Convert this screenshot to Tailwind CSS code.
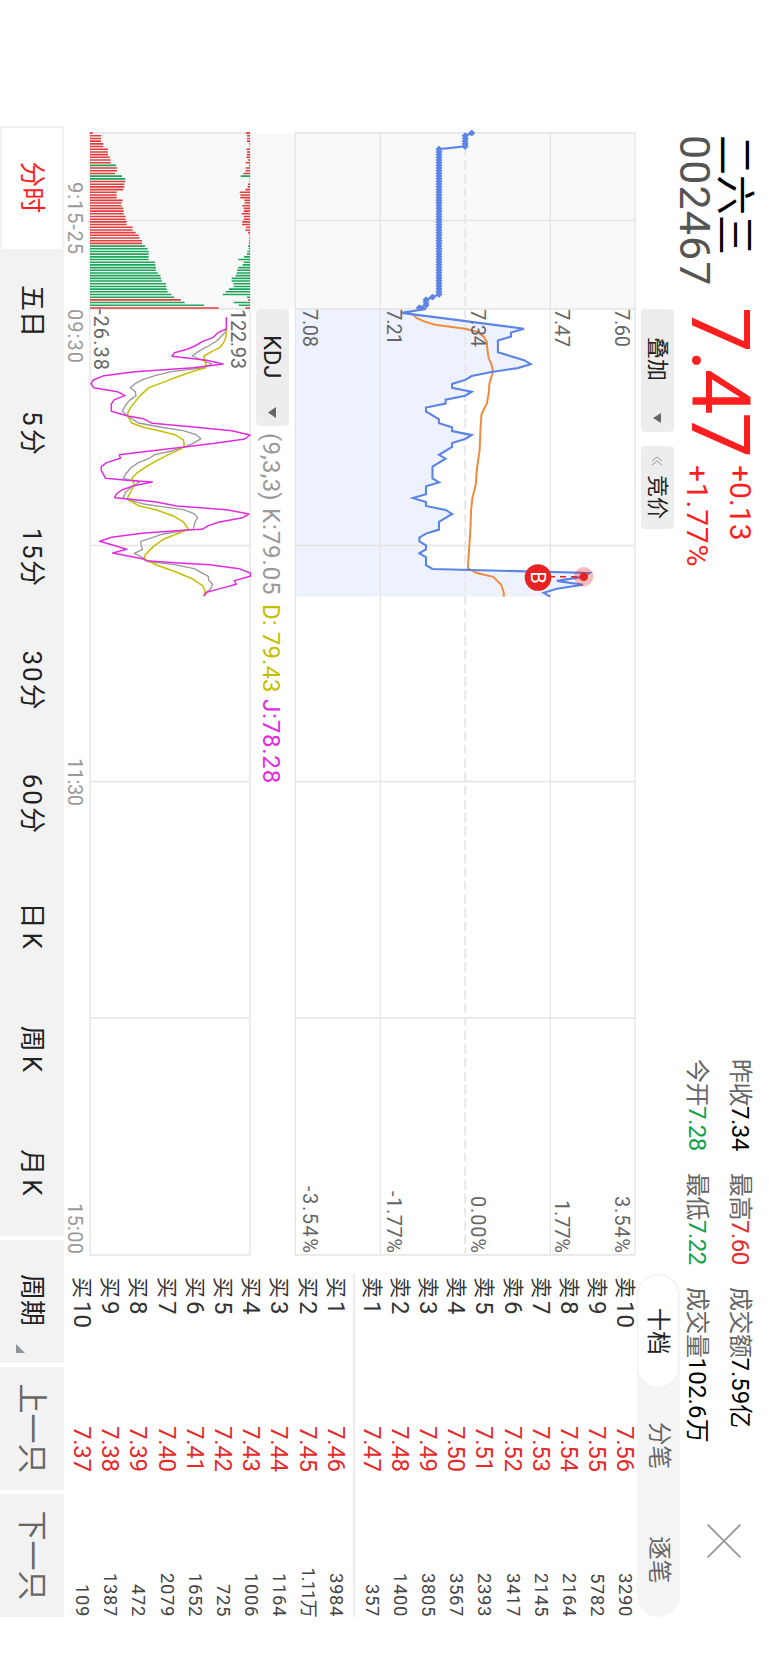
<!DOCTYPE html>
<html lang="zh">

<head>
    <meta charset="utf-8">
    <title>二六三 002467</title>
    <script src="https://cdn.jsdelivr.net/npm/@tailwindcss/browser@4"></script>
</head>

<body class="bg-white">
    <div class="w-[769px] h-[1665px] overflow-hidden">
    <!-- landscape screen, turned 90deg clockwise -->
    <main class="w-[1665px] h-[769px] origin-top-left translate-x-[769px] rotate-90 flex flex-col bg-white text-[#222] whitespace-nowrap font-['Roboto','Noto_Sans_CJK_SC',sans-serif]">

        <div class="flex h-[705px]">
            <div class="w-[1255px] shrink-0 pl-[133px] flex flex-col">
                <!-- header -->
                <header class="h-[89px] flex">
                    <div class="w-[176px] shrink-0 pt-[15px] pl-[2px]">
                        <h1 class="text-[40px] leading-[39px] text-black">二六三</h1>
                        <p class="text-[43px] leading-[40px] tracking-[1.1px] text-[#555]">002467</p>
                    </div>
                    <div class="w-[156px] shrink-0 text-[81px] leading-[100px] tracking-[-2.4px] text-[#fd1f1f] -ml-[2px]">7.47</div>
                    <div class="w-[596px] shrink-0 pt-[7px] pl-[2px] text-[30px] leading-[43px] text-[#fd1f1f]">
                        <p>+0.13</p>
                        <p class="tracking-[0.8px]">+1.77%</p>
                    </div>
                    <div class="shrink-0 pt-[8px] grid grid-cols-[114px_114px_170px] auto-rows-[43px] text-[24px] leading-[43px] tracking-[-0.5px] text-black">
                        <p><span class="text-[24px] text-[#666]">昨收</span><span>7.34</span></p>
                        <p><span class="text-[24px] text-[#666]">最高</span><span class="text-[#e42a2a]">7.60</span></p>
                        <p><span class="text-[24px] text-[#666]">成交额</span><span class="tracking-normal">7.59</span><span>亿</span></p>
                        <p><span class="text-[24px] text-[#666]">今开</span><span class="text-[#12a14b]">7.28</span></p>
                        <p><span class="text-[24px] text-[#666]">最低</span><span class="text-[#12a14b]">7.22</span></p>
                        <p><span class="text-[24px] text-[#666]">成交量</span><span class="tracking-[0.2px]">102.6</span><span>万</span></p>
                    </div>
                </header>

                <!-- overlay buttons -->
                <div class="h-[45px] shrink-0 pt-[6px] pl-[176px] flex gap-[14px] text-[22px] leading-[33px]">
                    <button class="w-[123px] h-[33px] rounded bg-[#ededed] flex items-center pl-[28px]">
                        <span>叠加</span>
                        <svg class="ml-[32px] shrink-0" width="10" height="8" viewBox="0 0 10 8"><path d="M0 0H10L5 8Z" fill="#666"/></svg>
                    </button>
                    <button class="w-[83px] h-[33px] rounded bg-[#ededed] flex items-center pl-[10px]">
                        <svg class="shrink-0" width="10" height="12" viewBox="0 0 10 12" fill="none" stroke="#999"><path d="M5 1L1 6L5 11M9 1L5 6L9 11"/></svg>
                        <span class="ml-[9px]">竞价</span>
                    </button>
                </div>

                <!-- price chart -->
                <svg class="h-[341px] shrink-0 overflow-visible" width="1123" height="341" viewBox="0 0 1123 341">
                    <rect width="176" height="341" fill="#f9f9f9"/>
                    <path id="area" fill="#eef2fe"/>
                    <g fill="none" stroke="#e4e4e4" stroke-width="1.3">
                        <path d="M0 0H1122V339.7H0ZM0 84.7H1122M0 254.7H1122M87.5 0V340M176 0V340M412.5 0V340M648.5 0V340M885 0V340"/>
                        <path d="M0 169.8H1122" stroke="#e8e8e8" stroke-width="2" stroke-dasharray="9.6 4"/>
                    </g>
                    <path id="avg" fill="none" stroke="#f08a3c" stroke-width="2" stroke-linejoin="round"/>
                    <path id="price" fill="none" stroke="#5a84e6" stroke-width="2.1"/>
                    <path id="auction" fill="#5a84e6" stroke="#5a84e6" stroke-width="1"/>
                    <g font-size="20" fill="#666">
                        <text x="176" y="20" textLength="38">7.60</text>
                        <text x="176" y="80.3" textLength="38">7.47</text>
                        <text x="176" y="164.3" textLength="38">7.34</text>
                        <text x="176" y="248.3" textLength="36">7.21</text>
                        <text x="176" y="332.3" textLength="38">7.08</text>
                        <text x="1063" y="20" textLength="57">3.54%</text>
                        <text x="1067" y="80.3" textLength="53">1.77%</text>
                        <text x="1063" y="164.3" textLength="57">0.00%</text>
                        <text x="1058" y="248.3" textLength="62">-1.77%</text>
                        <text x="1053" y="332.3" textLength="67">-3.54%</text>
                    </g>
                    <circle cx="443.7" cy="51.3" r="9.7" fill="#e62222" fill-opacity=".3"/>
                    <circle cx="443.7" cy="51.3" r="4.3" fill="#e62222"/>
                    <path d="M443.7 55V84" stroke="#e62222" stroke-width="1.5" stroke-dasharray="6 5" stroke-dashoffset="-3"/>
                    <circle cx="444.5" cy="97" r="13.3" fill="#e62222"/>
                    <text x="444.5" y="104.3" font-size="20" fill="#fff" text-anchor="middle">B</text>
                </svg>

                <!-- indicator row -->
                <div class="h-[44px] shrink-0 flex items-center text-[24px]">
                    <div class="w-[176px] h-[44px] bg-[#f9f9f9]"></div>
                    <button class="w-[117px] h-[33px] mt-[-1px] rounded bg-[#ededed] flex items-center pl-[26px]">
                        <span class="w-[43px] pt-[1px] tracking-[-0.3px]">KDJ</span>
                        <svg class="ml-[29px] shrink-0" width="11" height="8" viewBox="0 0 11 8"><path d="M0 0H11L5.5 8Z" fill="#666"/></svg>
                    </button>
                    <span class="ml-[7px] pt-[1px] w-[75px] tracking-[0.2px] text-[#999]">(9,3,3)</span>
                    <span class="w-[96px] pt-[1px] tracking-[0.9px] text-[#999]">K:79.05</span>
                    <span class="w-[95px] pt-[1px] tracking-[0.1px] text-[#c4be00]">D: 79.43</span>
                    <span class="pt-[1px] tracking-[0.8px] text-[#e12be0]">J:78.28</span>
                </div>

                <!-- KDJ chart, left part shows matched and unmatched auction volume -->
                <svg class="h-[186px] shrink-0 overflow-visible" width="1123" height="186" viewBox="0 0 1123 186">
                    <rect width="176" height="160" fill="#f9f9f9"/>
                    <path d="M0 0H1122V160H0ZM87.5 0V160M176 0V160M412.5 0V160M648.5 0V160M885 0V160" fill="none" stroke="#e4e4e4" stroke-width="1.3"/>
                    <path id="up" stroke="#e23c3c" stroke-width="1.6"/>
                    <path id="down" stroke="#1ca65a" stroke-width="1.6"/>
                    <g font-size="20" fill="#666">
                        <text x="176" y="19" textLength="60">122.93</text>
                        <text x="176" y="156.5" textLength="61">-26.38</text>
                    </g>
                    <g font-size="20" fill="#999">
                        <text x="49" y="182" textLength="72">9:15-25</text>
                        <text x="176" y="182" textLength="54">09:30</text>
                        <text x="625" y="182" textLength="48">11:30</text>
                        <text x="1070" y="182" textLength="51">15:00</text>
                    </g>
                    <g transform="matrix(0 -.3333 .3333 0 167 190)" fill="none" stroke-width="4" stroke-linejoin="round">
                        <polyline stroke="#999" points="499,87 497,95 485,108 470,123 445,138 430,146 410,158 397,168 425,180 455,192 433,203 335,215 285,227 250,238 225,251 211,263 226,275 228,287 208,302 195,318 187,334 204,348 235,369 300,381 370,392 408,404 423,416 400,430 374,441 335,453 284,464 268,475 235,488 212,504 197,522 190,535 215,541 240,546 215,560 198,575 189,593 207,600 250,612 305,620 370,629 402,641 413,653 405,666 400,688 370,692 310,702 243,724 243,736 248,748 223,760 252,775 265,785 345,794 402,806 445,829 446,841 458,853 452,866 440,877 433,888"/>
                        <polyline stroke="#c4be00" stroke-width="4.5" points="499,87 498,110 490,130 480,142 455,155 432,168 433,181 438,192 437,203 400,214 340,235 267,263 240,287 210,325 203,340 203,348 215,369 250,382 300,393 345,404 370,420 373,436 365,446 325,464 290,482 255,502 230,520 216,535 220,546 223,556 215,570 203,593 205,599 235,617 290,630 340,648 370,666 386,688 355,700 310,718 280,740 255,765 255,778 290,795 350,817 400,838 428,858 435,872 433,888"/>
                        <polyline stroke="#e12be0" stroke-width="4.5" points="499,52 499,87 474,98 460,112 428,124 410,135 384,147 343,158 336,169 440,181 489,192 400,203 225,215 132,227 100,240 93,251 101,263 172,275 195,287 163,299 154,312 154,334 203,348 250,356 277,370 400,381 515,392 570,405 555,417 465,430 374,441 270,453 178,464 181,475 140,488 124,500 124,512 137,535 200,541 277,546 222,557 185,570 169,582 164,593 203,597 285,605 350,618 500,629 567,642 548,653 478,666 445,677 427,688 380,690 245,700 155,712 119,724 160,736 200,748 158,759 250,777 258,782 355,789 450,794 537,806 571,819 571,829 523,842 529,853 480,866 440,877 431,888"/>
                    </g>
                </svg>
            </div>

            <!-- order book -->
            <aside class="w-[343px] shrink-0 ml-[19px] flex flex-col">
                <div class="h-[89px] pt-[28px] pl-[250px]">
                    <svg width="34" height="34" viewBox="0 0 34 34" stroke="#999" stroke-width="1.8"><path d="M.5 .5L33.5 33.5M33.5 .5L.5 33.5"/></svg>
                </div>
                <div class="h-[43px] shrink-0 rounded-full bg-[#f5f5f5] grid grid-cols-3 text-[23.5px] leading-[43px] text-center text-[#666]">
                    <span class="h-[42px] mt-[1px] leading-[40px] rounded-full bg-white border border-[#efefef] text-[#222]">十档</span>
                    <span>分笔</span>
                    <span>逐笔</span>
                </div>
                <div id="sell" class="mt-[-2px] h-[281px] shrink-0 flex flex-col"></div>
                <div class="mt-[3px] h-[2px] shrink-0 bg-[#ebebeb]"></div>
                <div id="buy" class="mt-[3px] h-[282px] shrink-0 flex flex-col"></div>
            </aside>
        </div>

        <!-- period tabs -->
        <nav class="h-[64px] ml-[126px] w-[1491px] flex gap-[4px] text-[26px] leading-[64px] text-center">
            <div class="w-[1110px] shrink-0 bg-[#f2f2f2] grid grid-cols-9">
                <div class="bg-white border-2 border-r-0 border-[#f2f2f2] pr-[3px] leading-[60px] text-[#fd1f1f]">分时</div>
                <div>五日</div>
                <div class="tracking-[3px]">5分</div>
                <div class="tracking-[1.5px]">15分</div>
                <div class="tracking-[2px]">30分</div>
                <div class="tracking-[2px]">60分</div>
                <div class="tracking-[4px]">日K</div>
                <div class="tracking-[4px]">周K</div>
                <div class="tracking-[4px]">月K</div>
            </div>
            <div class="w-[123px] shrink-0 bg-[#f2f2f2] flex items-end">
                <span class="ml-[34px]">周期</span>
                <svg class="ml-[18px] mb-[16px]" width="9" height="9" viewBox="0 0 9 9"><path d="M9 0V9H0Z" fill="#8f969b"/></svg>
            </div>
            <div class="w-[123px] shrink-0 bg-[#f2f2f2] text-[30px] text-[#666]">上一只</div>
            <div class="w-[123px] shrink-0 bg-[#f2f2f2] text-[30px] text-[#666]">下一只</div>
        </nav>
    </main>
    </div>

    <template id="row">
        <div class="flex-1 flex items-center text-[24px] leading-[28px]">
            <span class="w-[27px] pl-[3px] text-[21px] text-[#333]"></span>
            <span class="w-[125px] text-[#333]"></span>
            <span class="w-[70px] tracking-[-0.3px] text-[#e42a2a]"></span>
            <span class="flex-1 text-right text-[18.5px] text-[#444]"></span>
        </div>
    </template>

    <script>
        const $ = id => document.getElementById(id);

        // order book
        const sell = ['3290', '5782', '2164', '2145', '3417', '2393', '3567', '3805', '1400', '357'];
        const buy = ['3984', '1.11万', '1164', '1006', '725', '1652', '2079', '472', '1387', '109'];
        function addRow(box, side, level, price, volume) {
            const row = $('row').content.cloneNode(true);
            const cells = row.querySelectorAll('span');
            cells[0].textContent = side;
            cells[1].textContent = level;
            cells[2].textContent = price.toFixed(2);
            cells[3].textContent = volume;
            cells[3].classList.add(volume.endsWith('万') ? 'tracking-[-1px]' : 'tracking-[0.6px]');
            $(box).appendChild(row);
        }
        sell.forEach((v, i) => addRow('sell', '卖', 10 - i, 7.56 - i / 100, v));
        buy.forEach((v, i) => addRow('buy', '买', i + 1, 7.46 - i / 100, v));

        // price per minute, in cents from the previous close (7.34)
        const X = m => 176 + m * 3.94;
        const Y = c => 169.8 - c * 6.54;
        const prices = [[0, -6], [1, -9.7], [5, 9], [6, 7], [7, 7], [8, 5], [11, 5], [13, 9], [14, 10], [15, 8], [16, 4], [17, 1], [18, 0],
            [19, -2], [20, -2], [21, 1], [22, 0], [23, -3], [24, -3], [25, -6], [26, -6], [28, -4], [29, -4], [30, -2], [31, -2], [32, 1],
            [33, 0], [34, -2], [35, -2], [37, -4], [38, -3], [40, -5], [43, -5], [44, -4], [45, -6], [47, -6], [48, -8], [49, -6], [50, -6],
            [51, -3], [52, -2], [54, -4], [56, -4], [57, -6], [58, -7], [59, -7], [60, -6], [61, -6], [62, -7], [63, -6], [65, -6],
            [66, -5], [67, 19], [68, 18], [69, 14], [70, 18], [71, 14], [72, 12], [73, 13]];
        const avg = [[1, -9], [1.5, -7.9], [2.3, -7.4], [3.2, -6.2], [4, -4.6], [5, 0], [5.8, 1.9], [7, 2.8], [8.3, 3.3], [10.4, 3.4], [12.5, 3.6], [14, 4],
            [15.5, 4.2], [16, 4.2], [19, 3.7], [21.4, 3.6], [24, 3.3], [26.7, 2.5], [29.9, 2.35], [35.8, 2.2], [40.4, 1.8], [44.7, 1.6],
            [48, 1.1], [51, 0.9], [56, 0.8], [62, 0.55], [65.8, 0.4], [67, 1.8], [68, 4.3], [69, 4.9], [70, 5.5], [71, 5.7], [72, 5.9], [73, 5.9]];
        const line = pts => 'M' + pts.map(p => X(p[0]).toFixed(1) + ' ' + Y(p[1]).toFixed(1)).join('L');
        $('avg').setAttribute('d', line(avg));
        $('area').setAttribute('d', line(prices) + 'V340H176Z');

        // call auction: one diamond per tick, joined to the price line
        const step = 2.69;
        const auction = k => k < 1 ? 1 : k < 6 ? 0 : k < 61 ? -4 : k < 62 ? -5 : k < 65 ? -6 : -7;
        let marks = '', joined = 'M';
        for (let k = 0; k < 66; k++) {
            const x = (k * step).toFixed(1), y = Y(auction(k)).toFixed(1);
            marks += `M${x} ${y}m-3 0l3 -3l3 3l-3 3Z`;
            joined += `${x} ${y}L`;
        }
        $('auction').setAttribute('d', marks);
        $('price').setAttribute('d', joined + line(prices).slice(1));

        // auction volume, matched from the bottom and unmatched from the top
        const matched = [8, 33, 33, 33, 40, 40, 54, 54, 54, 59, 62, 62, 78, 81, 81, 75, 96, 106, 106, 103, 103, 100, 80, 80, 80, 98, 95, 95,
            100, 101, 101, 107, 107, 110, 110, 128, 128, 137, 146, 149, 156, 156, 165, 173, 176, 176, 176, 176, 195, 196, 198, 198, 203, 211,
            213, 216, 228, 229, 230, 233, 244, 252, 272, 284, 342, 386];
        const unmatched = [12, 9, 9, 9, 2, 1, 11, 9, 9, 11, 7, 13, 3, 13, 13, 20, 28, 1, 1, 6, 7, 14, 31, 29, 29, 17, 16, 23, 19, 19, 25, 19,
            19, 23, 24, 12, 14, 6, 2, 2, 2, 3, 6, 4, 8, 9, 18, 35, 19, 22, 35, 39, 40, 43, 55, 55, 50, 49, 63, 73, 82, 9, 5, 49, 34, 14];
        const isDown = k => k === 12 || k === 16 || k === 17 || (k >= 42 && k !== 62 && k !== 65);
        const bars = { up: '', down: '' };
        matched.forEach((m, k) => {
            const x = (k * step + 0.1).toFixed(2);
            bars[isDown(k) ? 'down' : 'up'] += `M${x} 160v${-m / 3}M${x} 0v${unmatched[k] / 3}`;
        });
        $('up').setAttribute('d', bars.up);
        $('down').setAttribute('d', bars.down);
    </script>
</body>

</html>
